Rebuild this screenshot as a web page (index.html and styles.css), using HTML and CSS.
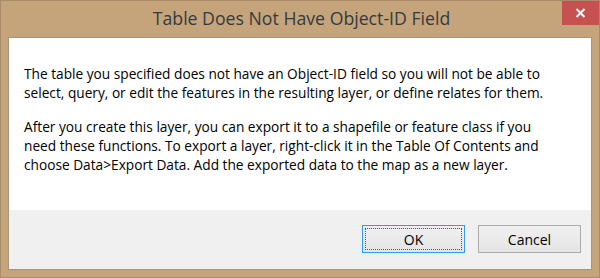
FILE: index.html
```html
<!DOCTYPE html>
<html lang="en">

<head>
    <meta charset="UTF-8">
    <meta name="viewport" content="width=device-width, initial-scale=1.0">
    <title>Table Does Not Have Object-ID Field</title>
    <link rel="stylesheet" href="styles.css">
</head>

<body>
    <div class="window">
        <div class="titlebar">
            <div class="title">Table Does Not Have Object-ID Field</div>
            <div class="close">
                <svg width="11" height="10" viewBox="0 0 11 10">
                    <path d="M1.5 1 L9.5 9 M9.5 1 L1.5 9" stroke="#fff" stroke-width="2" fill="none" />
                </svg>
            </div>
        </div>
        <div class="client">
            <div class="message">
                <p>The table you specified does not have an Object-ID field so you will not be able to<br>select, query, or edit the features in the resulting layer, or define relates for them.</p>
                <p>After you create this layer, you can export it to a shapefile or feature class if you<br>need these functions. To export a layer, right-click it in the Table Of Contents and<br>choose Data&gt;Export Data. Add the exported data to the map as a new layer.</p>
            </div>
            <div class="footer">
                <button class="btn default"><span>OK</span></button>
                <button class="btn"><span>Cancel</span></button>
            </div>
        </div>
    </div>
</body>

</html>
```

FILE: styles.css
```css
body {
    margin: 0;
    font-family: "Open Sans", "Noto Sans", sans-serif;
}

.window {
    width: 600px;
    height: 278px;
    box-sizing: border-box;
    background-color: #c5a47c;
    border: 1px solid #a88c69;
    padding: 0 7px 7px 7px;
    display: flex;
    flex-direction: column;
}

.titlebar {
    position: relative;
    height: 36px;
    display: flex;
    align-items: center;
    justify-content: center;
}

.title {
    font-size: 17.7px;
    color: #333b3f;
    margin-top: -3px;
    margin-left: 3px;
}

.close {
    position: absolute;
    right: -7px;
    top: 0;
    width: 37px;
    height: 24px;
    background-color: #c75050;
    display: flex;
    align-items: center;
    justify-content: center;
}

.client {
    flex: 1;
    border: 1px solid #a8967a;
    background-color: #fff;
    display: flex;
    flex-direction: column;
}

.message {
    flex: 1;
    padding: 26px 0 0 15px;
    font-size: 13.7px;
    line-height: 19px;
    color: #000;
    white-space: nowrap;
}

.message p {
    margin: 0 0 15px 0;
}

.footer {
    height: 59px;
    background-color: #f0f0f0;
    display: flex;
    justify-content: flex-end;
    align-items: flex-start;
    gap: 13px;
    padding: 15px 10px 0 0;
    box-sizing: border-box;
}

.btn {
    width: 103px;
    height: 28px;
    padding: 2px;
    border: 1px solid #acacac;
    background: linear-gradient(#f0f0f0, #e5e5e5);
    font-family: "Open Sans", "Noto Sans", sans-serif;
    font-size: 14px;
    color: #000;
    display: flex;
}

.btn span {
    flex: 1;
    display: flex;
    align-items: center;
    justify-content: center;
    border: 1px dotted transparent;
}

.btn.default {
    border-color: #3399ff;
}

.btn.default span {
    border-color: #555;
}
```
